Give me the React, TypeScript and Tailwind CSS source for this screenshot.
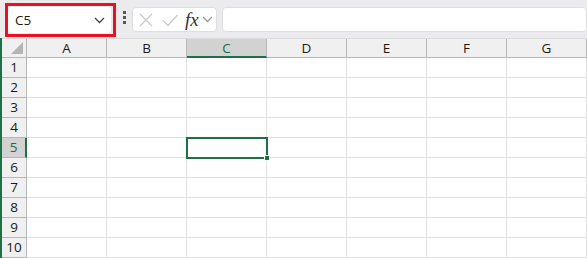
import React from "react";

const cols = ["A", "B", "C", "D", "E", "F", "G"];
const rows = [1, 2, 3, 4, 5, 6, 7, 8, 9, 10];

function Chevron({ className }: { className?: string }) {
  return (
    <svg width="11" height="7" viewBox="0 0 11 7" className={className}>
      <path d="M1 1 L5.5 5.5 L10 1" fill="none" stroke="currentColor" strokeWidth="1.3" />
    </svg>
  );
}

export default function App() {
  return (
    <div className="relative w-[587px] h-[258px] overflow-hidden bg-white font-['Open_Sans','Noto_Sans',sans-serif] text-[#1a1a1a]">
      {/* toolbar */}
      <div className="flex h-[38px] items-start bg-[#ebebee] pl-[5px] pt-[3px]">
        <div className="h-[34px] w-[111px] border-[3px] border-[#e81123] py-[1px] pr-[2px]">
          <div className="flex h-full items-center justify-between rounded-[4px] bg-white pl-[7px] pr-[6px] text-[13.5px]">
            <span>C5</span>
            <Chevron className="text-[#444]" />
          </div>
        </div>
        <div className="ml-[3px] mt-[8px] flex w-[10px] flex-col items-center gap-[2px]">
          <span className="h-[3px] w-[3px] bg-[#555]" />
          <span className="h-[3px] w-[3px] bg-[#555]" />
          <span className="h-[3px] w-[3px] bg-[#555]" />
        </div>
        <div className="ml-[3px] mt-[4px] flex h-[25px] w-[85px] items-center rounded-[4px] border border-[#dedee2] bg-white pl-[4px]">
          <svg width="16" height="16" viewBox="0 0 16 16" className="ml-[1px]">
            <path d="M2 2 L14 14 M14 2 L2 14" stroke="#c9c9c9" strokeWidth="1.3" fill="none" />
          </svg>
          <svg width="18" height="16" viewBox="0 0 18 16" className="ml-[7px]">
            <path d="M2 8.5 L7 13.5 L16.5 3" stroke="#c9c9c9" strokeWidth="1.3" fill="none" />
          </svg>
          <span className="ml-[6px] font-['Liberation_Serif',serif] text-[19px] italic leading-none text-[#333]">fx</span>
          <Chevron className="ml-[3px] text-[#9a9a9a]" />
        </div>
        <div className="ml-[5px] mt-[4px] h-[25px] flex-1 rounded-[4px] border border-[#dedee2] bg-white" />
      </div>

      {/* grid */}
      <div className="flex flex-col border-l-2 border-[#1e7145]">
        {/* header row */}
        <div className="flex h-[20px] border-t border-[#dcdcdc] bg-[#f0f0f0]">
          <div className="relative h-full w-[25px] border-b border-r border-[#b7b7b7]">
            <div className="absolute bottom-[3px] right-[3px] h-0 w-0 border-b-[12px] border-l-[12px] border-b-[#b4b4b4] border-l-transparent" />
          </div>
          {cols.map((c) =>
            c === "C" ? (
              <div
                key={c}
                className="flex h-full w-[80px] items-center justify-center border-b-2 border-r border-b-[#1e7145] border-r-[#b7b7b7] bg-[#d2d2d2] pt-[1px] text-[13.5px] text-[#1e6b3e]"
              >
                {c}
              </div>
            ) : (
              <div
                key={c}
                className="flex h-full w-[80px] items-center justify-center border-b border-r border-[#b7b7b7] text-[13.5px]"
              >
                {c}
              </div>
            )
          )}
        </div>
        {rows.map((r) => (
          <div key={r} className="flex h-[20px]">
            {r === 5 ? (
              <div className="flex h-full w-[25px] items-center justify-center border-b border-r-2 border-b-[#b7b7b7] border-r-[#1e7145] bg-[#d2d2d2] text-[13.5px] text-[#1e6b3e]">
                {r}
              </div>
            ) : (
              <div className="flex h-full w-[25px] items-center justify-center border-b border-r border-[#b7b7b7] bg-[#f0f0f0] text-[13.5px]">
                {r}
              </div>
            )}
            {cols.map((c) => (
              <div key={c} className="h-full w-[80px] border-b border-r border-[#e1e1e1]" />
            ))}
          </div>
        ))}
      </div>

      {/* selection */}
      <div className="absolute left-[186px] top-[137px] h-[22px] w-[82px] border-2 border-[#1e7145]" />
      <div className="absolute left-[264px] top-[155px] h-[6px] w-[6px] border border-white bg-[#1e7145]" />
    </div>
  );
}
